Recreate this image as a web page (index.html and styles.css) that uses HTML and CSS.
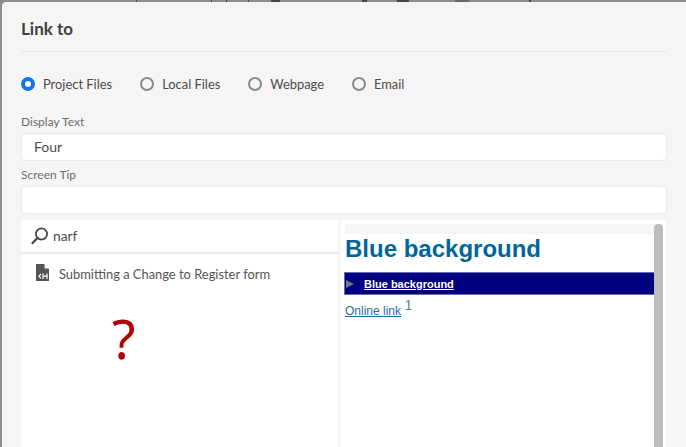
FILE: index.html
```html
<!DOCTYPE html>
<html lang="en">
<head>
<meta charset="utf-8">
<title>Link to</title>
<link rel="stylesheet" href="styles.css">
</head>
<body>
<div class="toolbar-strip">
  <i class="tick t1"></i><i class="tick t2"></i><i class="tick t3"></i><i class="tick t4"></i><i class="tick t5"></i><i class="tick t6"></i><i class="tick t7"></i><i class="tick t8"></i><i class="tick t9"></i>
</div>
<main class="dialog">
  <h1 class="title">Link to</h1>
  <div class="radios">
    <label class="radio"><span class="dot on"></span>Project Files</label>
    <label class="radio"><span class="dot"></span>Local Files</label>
    <label class="radio"><span class="dot"></span>Webpage</label>
    <label class="radio"><span class="dot"></span>Email</label>
  </div>
  <div class="field-label first">Display Text</div>
  <div class="input">Four</div>
  <div class="field-label">Screen Tip</div>
  <div class="input"></div>
  <div class="panes">
    <section class="left">
      <div class="search">
        <svg class="search-icon" width="18" height="18" viewBox="0 0 18 18" aria-hidden="true"><circle cx="10.5" cy="7" r="5.6" fill="none" stroke="#444" stroke-width="1.7"/><path d="M6.5 11 1.5 16" stroke="#444" stroke-width="2.2" stroke-linecap="round"/></svg>
        <span>narf</span>
      </div>
      <div class="item">
        <svg class="file-icon" width="13" height="17" viewBox="0 0 13 17" aria-hidden="true"><path d="M0 0h8l5 5v12H0z" fill="#555"/><path d="M8.6 0 13 4.4H8.6z" fill="#fff"/><path d="M5 10 3 12.2l2 2.2" fill="none" stroke="#fff" stroke-width="1.2"/><path d="M7 9.5v5.5M11 9.5v5.5M7 12.2h4" fill="none" stroke="#fff" stroke-width="1.2"/></svg>
        <span>Submitting a Change to Register form</span>
      </div>
      <div class="question">?</div>
    </section>
    <section class="right">
      <div class="preview">
        <div class="preview-strip"></div>
        <h2 class="preview-title">Blue background</h2>
        <div class="navbar"><span class="tri"></span><a class="navlink">Blue background</a></div>
        <p class="online"><a class="online-link">Online link</a> <sup class="ref">1</sup></p>
      </div>
      <div class="scrollbar"></div>
    </section>
  </div>
</main>
</body>
</html>
```
FILE: styles.css
```css
* { box-sizing: border-box; }
html, body { margin: 0; height: 100%; overflow: hidden; }
body {
  width: 686px;
  height: 447px;
  background: #8c8c8c;
  font-family: Lato, sans-serif;
  color: #4b4b4b;
  display: flex;
  flex-direction: column;
  position: relative;
}
.toolbar-strip {
  height: 2px;
  flex: none;
  display: flex;
}
.tick { display: block; height: 2px; background: #444; flex: none; }
.t1 { width: 1px; margin-left: 136px; }
.t2 { width: 1px; margin-left: 74px; }
.t3 { width: 1px; margin-left: 14px; }
.t4 { width: 1px; margin-left: 21px; }
.t5 { width: 9px; margin-left: 22px; }
.t6 { width: 5px; margin-left: 82px; }
.t7 { width: 12px; margin-left: 30px; }
.t8 { width: 14px; margin-left: 46px; background: #666; }
.t9 { width: 2px; margin-left: 60px; }
.dialog {
  flex: 1;
  margin-left: 2px;
  background: #f5f5f5;
  border-top-left-radius: 4px;
  padding: 0 19px 0 19px;
  display: flex;
  flex-direction: column;
  min-height: 0;
}
.title {
  margin: 0;
  padding-top: 16px;
  font-size: 17px;
  line-height: 22px;
  font-weight: 700;
  color: #404040;
  border-bottom: 1px solid #e8e8e8;
  flex: none;
  height: 50px;
}
.radios {
  display: flex;
  margin-top: 22px;
  height: 20px;
  align-items: center;
  flex: none;
}
.radio {
  display: flex;
  align-items: center;
  font-size: 12.9px;
  line-height: 20px;
  color: #4b4b4b;
  margin-right: 28px;
}
.dot {
  width: 14px;
  height: 14px;
  border-radius: 50%;
  border: 2px solid #8a8a8a;
  margin-right: 8px;
  background: #f5f5f5;
  flex: none;
}
.dot.on { border: 4px solid #1473e6; background: #fff; }
.field-label {
  font-size: 12px;
  line-height: 16px;
  height: 16px;
  color: #6e6e6e;
  margin-top: 6px;
  flex: none;
}
.field-label.first { margin-top: 20px; margin-bottom: 3px; }
.input {
  height: 28px;
  background: #fff;
  border: 1px solid #eaeaea;
  border-radius: 4px;
  padding: 0 12px;
  font-size: 14px;
  line-height: 25px;
  color: #4b4b4b;
  flex: none;
}
.field-label + .input { margin-top: 3px; }
.field-label.first + .input { margin-top: 0; }
.panes {
  flex: 1;
  margin-top: 6px;
  display: flex;
  gap: 3px;
  min-height: 0;
  background: #f5f5f5;
  margin-right: 1px;
}
.left {
  width: 317px;
  background: #fff;
  display: flex;
  flex-direction: column;
  flex: none;
}
.search {
  height: 34px;
  border-bottom: 2px solid #ececec;
  display: flex;
  align-items: center;
  padding: 0 0 1px 10px;
  gap: 4px;
  font-size: 13.8px;
  color: #4b4b4b;
  flex: none;
}
.item {
  display: flex;
  align-items: center;
  height: 20px;
  margin-top: 10px;
  padding-left: 15px;
  gap: 10px;
  font-size: 12.9px;
  color: #555;
  flex: none;
}
.file-icon { align-self: flex-start; }
.question {
  font-size: 54px;
  line-height: 60px;
  color: #b40000;
  margin-top: 24px;
  margin-left: 91px;
  font-family: "Noto Sans", sans-serif;
}
.right {
  flex: 1;
  background: #fff;
  display: flex;
  padding: 4px 3px 0 3px;
  gap: 0;
  min-width: 0;
}
.preview {
  flex: 1;
  min-width: 0;
  font-family: "Liberation Sans", sans-serif;
}
.preview-strip { height: 10px; margin-left: 1px; background: #f5f5f5; }
.preview-title {
  margin: 1px 0 0 1px;
  font-size: 24px;
  line-height: 28px;
  font-weight: 700;
  color: #006699;
}
.navbar {
  margin-top: 9px;
  height: 23px;
  background: #000080;
  border: 1px solid #6a6ab8;
  border-right: 0;
  display: flex;
  align-items: center;
  padding-left: 1px;
}
.tri {
  width: 0;
  height: 0;
  border-left: 8px solid #6b7a85;
  border-top: 4px solid transparent;
  border-bottom: 4px solid transparent;
  margin-right: 10px;
}
.navlink {
  color: #fff;
  font-size: 11px;
  font-weight: 700;
  text-decoration: underline;
}
.online {
  margin: 4px 0 0 1px;
  font-size: 12px;
  line-height: 24px;
  color: #006699;
}
.online-link { text-decoration: underline; color: #1f7097; }
.ref { font-size: 14px; color: #4a88aa; line-height: 0; }
.scrollbar {
  width: 9px;
  flex: none;
  background: #bdbdbd;
  border-radius: 4px 4px 0 0;
}
```
